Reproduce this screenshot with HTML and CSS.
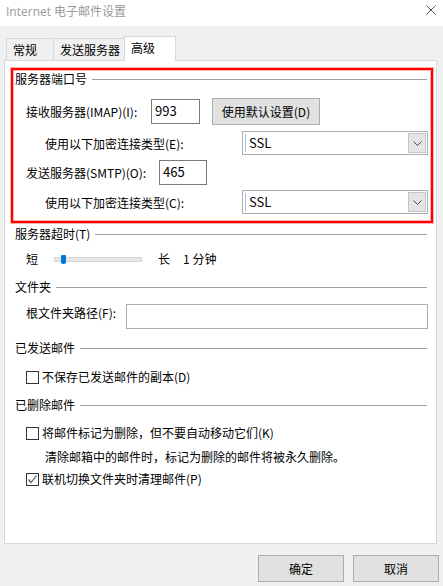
FILE: index.html
```html
<!DOCTYPE html>
<html lang="zh-CN">
<head>
<meta charset="utf-8">
<title>Internet 电子邮件设置</title>
<link rel="stylesheet" href="styles.css">
</head>
<body>
<div class="window">
  <div class="titlebar">
    <span class="title">Internet 电子邮件设置</span>
    <svg class="close" width="10" height="10" viewBox="0 0 10 10"><path d="M0.5 0.5 L9.5 9.5 M9.5 0.5 L0.5 9.5" stroke="#555" stroke-width="1" fill="none"/></svg>
  </div>
  <div class="tabs">
    <div class="tab t-general">常规</div>
    <div class="tab t-send">发送服务器</div>
    <div class="tab active">高级</div>
  </div>
  <div class="panel">
    <div class="highlight">
      <div class="group-title">服务器端口号</div>
      <div class="row r1">
        <span class="lbl lbl-imap">接收服务器(IMAP)(I):</span>
        <div class="textbox tb-imap">993</div>
        <div class="btn btn-default">使用默认设置(D)</div>
      </div>
      <div class="row r2">
        <span class="lbl lbl-indent">使用以下加密连接类型(E):</span>
        <div class="select"><span class="caret"></span><span class="sel-text">SSL</span><span class="drop"><svg width="9" height="5" viewBox="0 0 9 5"><path d="M0.5 0.5 L4.5 4.5 L8.5 0.5" stroke="#444" stroke-width="1" fill="none"/></svg></span></div>
      </div>
      <div class="row r3">
        <span class="lbl lbl-smtp">发送服务器(SMTP)(O):</span>
        <div class="textbox tb-smtp">465</div>
      </div>
      <div class="row r4">
        <span class="lbl lbl-indent">使用以下加密连接类型(C):</span>
        <div class="select"><span class="caret"></span><span class="sel-text">SSL</span><span class="drop"><svg width="9" height="5" viewBox="0 0 9 5"><path d="M0.5 0.5 L4.5 4.5 L8.5 0.5" stroke="#444" stroke-width="1" fill="none"/></svg></span></div>
      </div>
    </div>

    <div class="group-title g-timeout">服务器超时(T)</div>
    <div class="row slider-row">
      <span class="lbl short">短</span>
      <div class="track"><span class="thumb"></span></div>
      <span class="lbl long">长</span>
      <span class="lbl minutes">1 分钟</span>
    </div>

    <div class="group-title g-folder">文件夹</div>
    <div class="row root-row">
      <span class="lbl lbl-root">根文件夹路径(F):</span>
      <div class="textbox tb-root"></div>
    </div>

    <div class="group-title g-sent">已发送邮件</div>
    <div class="row check-row c1">
      <span class="checkbox"></span>
      <span class="lbl">不保存已发送邮件的副本(D)</span>
    </div>

    <div class="group-title g-deleted">已删除邮件</div>
    <div class="row check-row c2">
      <span class="checkbox"></span>
      <span class="lbl">将邮件标记为删除，但不要自动移动它们(K)</span>
    </div>
    <div class="note">清除邮箱中的邮件时，标记为删除的邮件将被永久删除。</div>
    <div class="row check-row c3">
      <span class="checkbox checked"><svg width="11" height="11" viewBox="0 0 11 11"><path d="M1.5 5.5 L4 8.5 L9.5 1.5" stroke="#555" stroke-width="1.2" fill="none"/></svg></span>
      <span class="lbl">联机切换文件夹时清理邮件(P)</span>
    </div>
  </div>
  <div class="footer">
    <div class="btn btn-foot">确定</div>
    <div class="btn btn-foot">取消</div>
  </div>
</div>
</body>
</html>
```

FILE: styles.css
```css
* { box-sizing: border-box; }
html, body {
  margin: 0;
  padding: 0;
  background: #f0f0f0;
}
body {
  font-family: "Noto Sans CJK SC", "Noto Sans", sans-serif;
  font-size: 12px;
  line-height: 16px;
  color: #000;
}
.window {
  width: 443px;
  height: 586px;
  display: flex;
  flex-direction: column;
  overflow: hidden;
}
.titlebar {
  height: 26px;
  background: #fff;
  display: flex;
  align-items: center;
  padding: 0 7px 0 6px;
  flex: none;
}
.title {
  color: #9a9a9a;
  font-family: "Open Sans", "Noto Sans CJK SC", sans-serif;
  font-size: 12px;
  flex: 1;
  margin-top: -2px;
}
.close { display: block; margin-top: -6px; }

.tabs {
  display: flex;
  align-items: flex-end;
  padding: 9px 0 0 6px;
  height: 34px;
  flex: none;
  position: relative;
  z-index: 1;
}
.tab {
  height: 22px;
  border: 1px solid #d9d9d9;
  border-bottom: none;
  background: #f0f0f0;
  padding: 3px 0 0 6px;
  margin-right: -1px;
}
.t-general { width: 48px; }
.t-send { width: 72px; }
.tab.active {
  height: 25px;
  background: #fff;
  margin-bottom: -1px;
  padding: 3px 0 0 6px;
  width: 52px;
}
.panel {
  margin: 0 6px 0 4px;
  height: 484px;
  background: #fff;
  border: 1px solid #d9d9d9;
  padding: 0 8px 0 10px;
  flex: none;
}
.highlight {
  margin: 7px -5px 0 -4px;
  border: 2px solid #ff0000;
  box-shadow: 0 0 0 1px rgba(255, 0, 0, 0.3), inset 0 0 0 1px rgba(255, 0, 0, 0.3);
  padding: 1px 3px 7px 2px;
}
.group-title {
  display: flex;
  align-items: center;
  height: 16px;
  white-space: nowrap;
}
.group-title::after {
  content: "";
  flex: 1;
  height: 1px;
  background: #a0a0a0;
  margin: 0 1px 0 5px;
}
.row {
  display: flex;
  align-items: center;
}
.lbl { white-space: nowrap; }
.r1 { margin-top: 11px; height: 27px; }
.r2 { margin-top: 6px; height: 24px; }
.r3 { margin-top: 5px; height: 25px; }
.r4 { margin-top: 5px; height: 24px; }

.lbl-imap { margin-left: 11px; width: 125px; }
.lbl-smtp { margin-left: 11px; width: 133px; }
.lbl-indent { margin-left: 30px; margin-top: 2px; }

.textbox {
  height: 25px;
  border: 1px solid #7a7a7a;
  background: #fff;
  padding: 3px 0 0 3px;
  font-size: 13px;
}
.tb-imap { width: 49px; }
.tb-smtp { width: 48px; }

.btn {
  background: #e1e1e1;
  border: 1px solid #adadad;
  display: flex;
  align-items: center;
  justify-content: center;
}
.btn-default {
  margin-left: 12px;
  width: 108px;
  height: 27px;
}

.select {
  margin-left: auto;
  width: 186px;
  height: 24px;
  border: 1px solid #adadad;
  background: #fff;
  display: flex;
  align-items: center;
  padding: 1px;
}
.caret {
  width: 1px;
  height: 18px;
  background: #99c2e8;
  margin-left: 1px;
}
.sel-text {
  margin-left: 3px;
  flex: 1;
  font-size: 13px;
}
.drop {
  width: 18px;
  height: 20px;
  background: #e5e5e5;
  border: 1px solid #c5c5c5;
  display: flex;
  align-items: center;
  justify-content: center;
}
.drop svg { display: block; }

.g-timeout { margin-top: 3px; }
.slider-row { margin-top: 9px; height: 16px; }
.short { margin-left: 11px; }
.track {
  margin-left: 16px;
  width: 88px;
  height: 5px;
  background: #e7e7e7;
  border: 1px solid #d6d6d6;
  position: relative;
}
.thumb {
  position: absolute;
  left: 6px;
  top: -3px;
  width: 5px;
  height: 9px;
  background: #0078d7;
  border-radius: 1px 1px 2px 2px;
}
.long { margin-left: 16px; }
.minutes { margin-left: 13px; }

.g-folder { margin-top: 12px; }
.root-row { margin-top: 9px; height: 25px; align-items: flex-start; }
.lbl-root { margin-left: 11px; width: 100px; margin-top: 1px; }
.tb-root {
  flex: 1;
  border-color: #abadb3;
}

.g-sent { margin-top: 11px; }
.check-row { height: 16px; }
.c1 { margin-top: 13px; }
.g-deleted { margin-top: 12px; }
.c2 { margin-top: 12px; }
.note { margin: 8px 0 0 30px; height: 16px; white-space: nowrap; }
.c3 { margin-top: 6px; }

.checkbox {
  width: 13px;
  height: 13px;
  border: 1px solid #333;
  background: #fff;
  margin: 0 3px 0 11px;
  flex: none;
  display: flex;
  align-items: center;
  justify-content: center;
}
.checkbox svg { display: block; }

.footer {
  display: flex;
  justify-content: flex-end;
  gap: 9px;
  margin-top: 11px;
  padding-right: 4px;
}
.btn-foot {
  width: 86px;
  height: 27px;
}
```
